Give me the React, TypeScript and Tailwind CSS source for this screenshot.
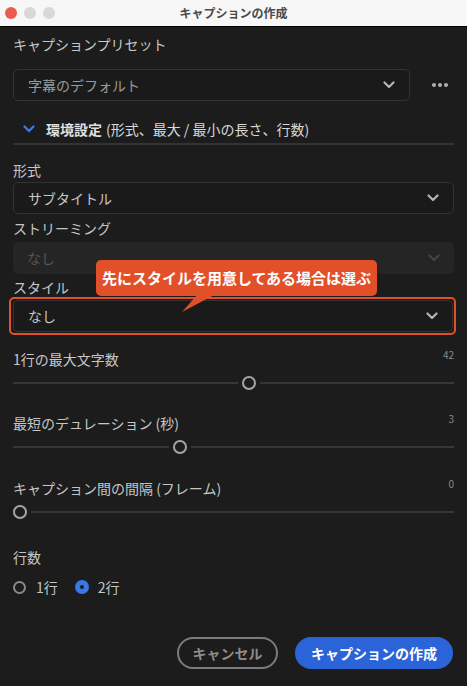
import { useState } from "react";

const font = { fontFamily: '"Noto Sans CJK JP", "Noto Sans", sans-serif' };

function Chevron({ className = "" }: { className?: string }) {
  return (
    <svg width="12" height="8" viewBox="0 0 12 8" className={className}>
      <path d="M1.5 1.5 L6 6 L10.5 1.5" fill="none" stroke="currentColor" strokeWidth="2.2" strokeLinecap="round" strokeLinejoin="round" />
    </svg>
  );
}

function Select({ value, disabled = false, dim = false }: { value: string; disabled?: boolean; dim?: boolean }) {
  return (
    <div
      className={
        "flex h-[32px] items-center justify-between rounded-[5px] pl-[14px] pr-[14px] text-[14px] " +
        (disabled ? "bg-[#252525] text-[#555]" : "border border-[#333] bg-[#1a1a1a] " + (dim ? "text-[#9a9a9a]" : "text-[#c6c6c6]"))
      }
    >
      <span>{value}</span>
      <Chevron className={disabled ? "text-[#444]" : "text-[#b4b4b4]"} />
    </div>
  );
}

function Slider({ label, value, frac }: { label: string; value: string; frac: number }) {
  return (
    <div>
      <div className="flex items-start justify-between">
        <span className="text-[14px] leading-[20px] text-[#c6c6c6]">{label}</span>
        <span className="mt-[-1px] text-[10px] leading-[14px] text-[#8a8a8a]">{value}</span>
      </div>
      <div className="relative mt-[6px] h-[16px]">
        <div className="absolute left-0 right-0 top-[7px] h-[2px] bg-[#363636]" />
        <div
          className="absolute top-[1px] h-[14px] w-[14px] rounded-full border-2 border-[#a5a5a5] bg-[#1c1c1c] shadow-[0_0_0_4px_#1c1c1c]"
          style={{ left: `${frac * 426}px` }}
        />
      </div>
    </div>
  );
}

export default function App() {
  const [lines] = useState(2);
  return (
    <div className="relative h-[686px] w-[467px] overflow-hidden bg-[#1c1c1c]" style={font}>
      <div className="relative flex h-[27px] items-center border-b border-black bg-[#f7f7f7]">
        <div className="flex gap-[7px] pl-[5px]">
          <span className="h-[12px] w-[12px] rounded-full bg-[#ec5b52]" />
          <span className="h-[12px] w-[12px] rounded-full bg-[#d8d8d8]" />
          <span className="h-[12px] w-[12px] rounded-full bg-[#d8d8d8]" />
        </div>
        <div className="absolute inset-0 flex items-center justify-center text-[12px] font-bold text-[#4a4a4a]">キャプションの作成</div>
      </div>

      <div className="px-[13px] pt-[7px]">
        <div className="text-[14px] leading-[20px] text-[#c6c6c6]">キャプションプリセット</div>
        <div className="mt-[15px] flex items-center">
          <div className="w-[397px]">
            <Select value="字幕のデフォルト" dim />
          </div>
          <div className="flex flex-1 justify-end gap-[2px] pr-[6px]">
            <span className="h-[4px] w-[4px] rounded-full bg-[#b0b0b0]" />
            <span className="h-[4px] w-[4px] rounded-full bg-[#b0b0b0]" />
            <span className="h-[4px] w-[4px] rounded-full bg-[#b0b0b0]" />
          </div>
        </div>

        <div className="mt-[18px] flex items-center border-b-2 border-[#333] pb-[4px] pl-[10px] text-[14px] leading-[20px] text-[#d8d8d8]">
          <Chevron className="mr-[11px] text-[#3a7bf0]" />
          <span className="font-bold text-[#e0e0e0]">環境設定</span>
          <span className="ml-[4px]">(形式、最大 / 最小の長さ、行数)</span>
        </div>

        <div className="mt-[15px] text-[14px] leading-[20px] text-[#c6c6c6]">形式</div>
        <div className="mt-[2px]">
          <Select value="サブタイトル" />
        </div>

        <div className="mt-[4px] text-[14px] leading-[20px] text-[#c6c6c6]">ストリーミング</div>
        <div className="mt-[4px]">
          <Select value="なし" disabled />
        </div>

        <div className="mt-[3px] text-[14px] leading-[20px] text-[#c6c6c6]">スタイル</div>
        <div className="-ml-[4px] -mr-[2px] rounded-[5px] border-2 border-[#e2502a] p-[1px] pl-[2px]">
          <Select value="なし" />
        </div>

        <div className="mt-[14px]">
          <Slider label="1行の最大文字数" value="42" frac={0.5376} />
        </div>
        <div className="mt-[22px]">
          <Slider label="最短のデュレーション (秒)" value="3" frac={0.3756} />
        </div>
        <div className="mt-[23px]">
          <Slider label="キャプション間の間隔 (フレーム)" value="0" frac={0} />
        </div>

        <div className="mt-[27px] text-[14px] leading-[20px] text-[#c6c6c6]">行数</div>
        <div className="mt-[10px] flex items-center text-[14px] leading-[20px] text-[#c6c6c6]">
          <span className={"h-[13px] w-[13px] rounded-full " + (lines === 1 ? "bg-[#3a78e8]" : "border-2 border-[#8a8a8a]")} />
          <span className="ml-[10px]">1行</span>
          <span className="ml-[17px] flex h-[14px] w-[14px] items-center justify-center rounded-full bg-[#3a78e8]">
            <span className="h-[4px] w-[4px] rounded-full bg-[#1c1c1c]" />
          </span>
          <span className="ml-[9px]">2行</span>
        </div>

        <div className="mt-[40px] flex justify-end gap-[17px] pr-[1px]">
          <button className="h-[32px] w-[101px] rounded-full border-2 border-[#7c7c7c] text-[14px] font-bold text-[#8c8c8c]">キャンセル</button>
          <button className="h-[32px] w-[158px] rounded-full bg-[#2b63d9] text-[14px] font-bold text-white">キャプションの作成</button>
        </div>
      </div>

      <div className="absolute left-[96px] top-[260px] flex h-[36px] w-[281px] items-center justify-center rounded-[5px] bg-[#e2502a] text-[15px] font-bold text-white">
        先にスタイルを用意してある場合は選ぶ
      </div>
      <svg className="absolute left-[180px] top-[294px]" width="40" height="20" viewBox="0 0 40 20">
        <polygon points="18,0 36,0 2,18" fill="#e2502a" />
      </svg>
    </div>
  );
}
